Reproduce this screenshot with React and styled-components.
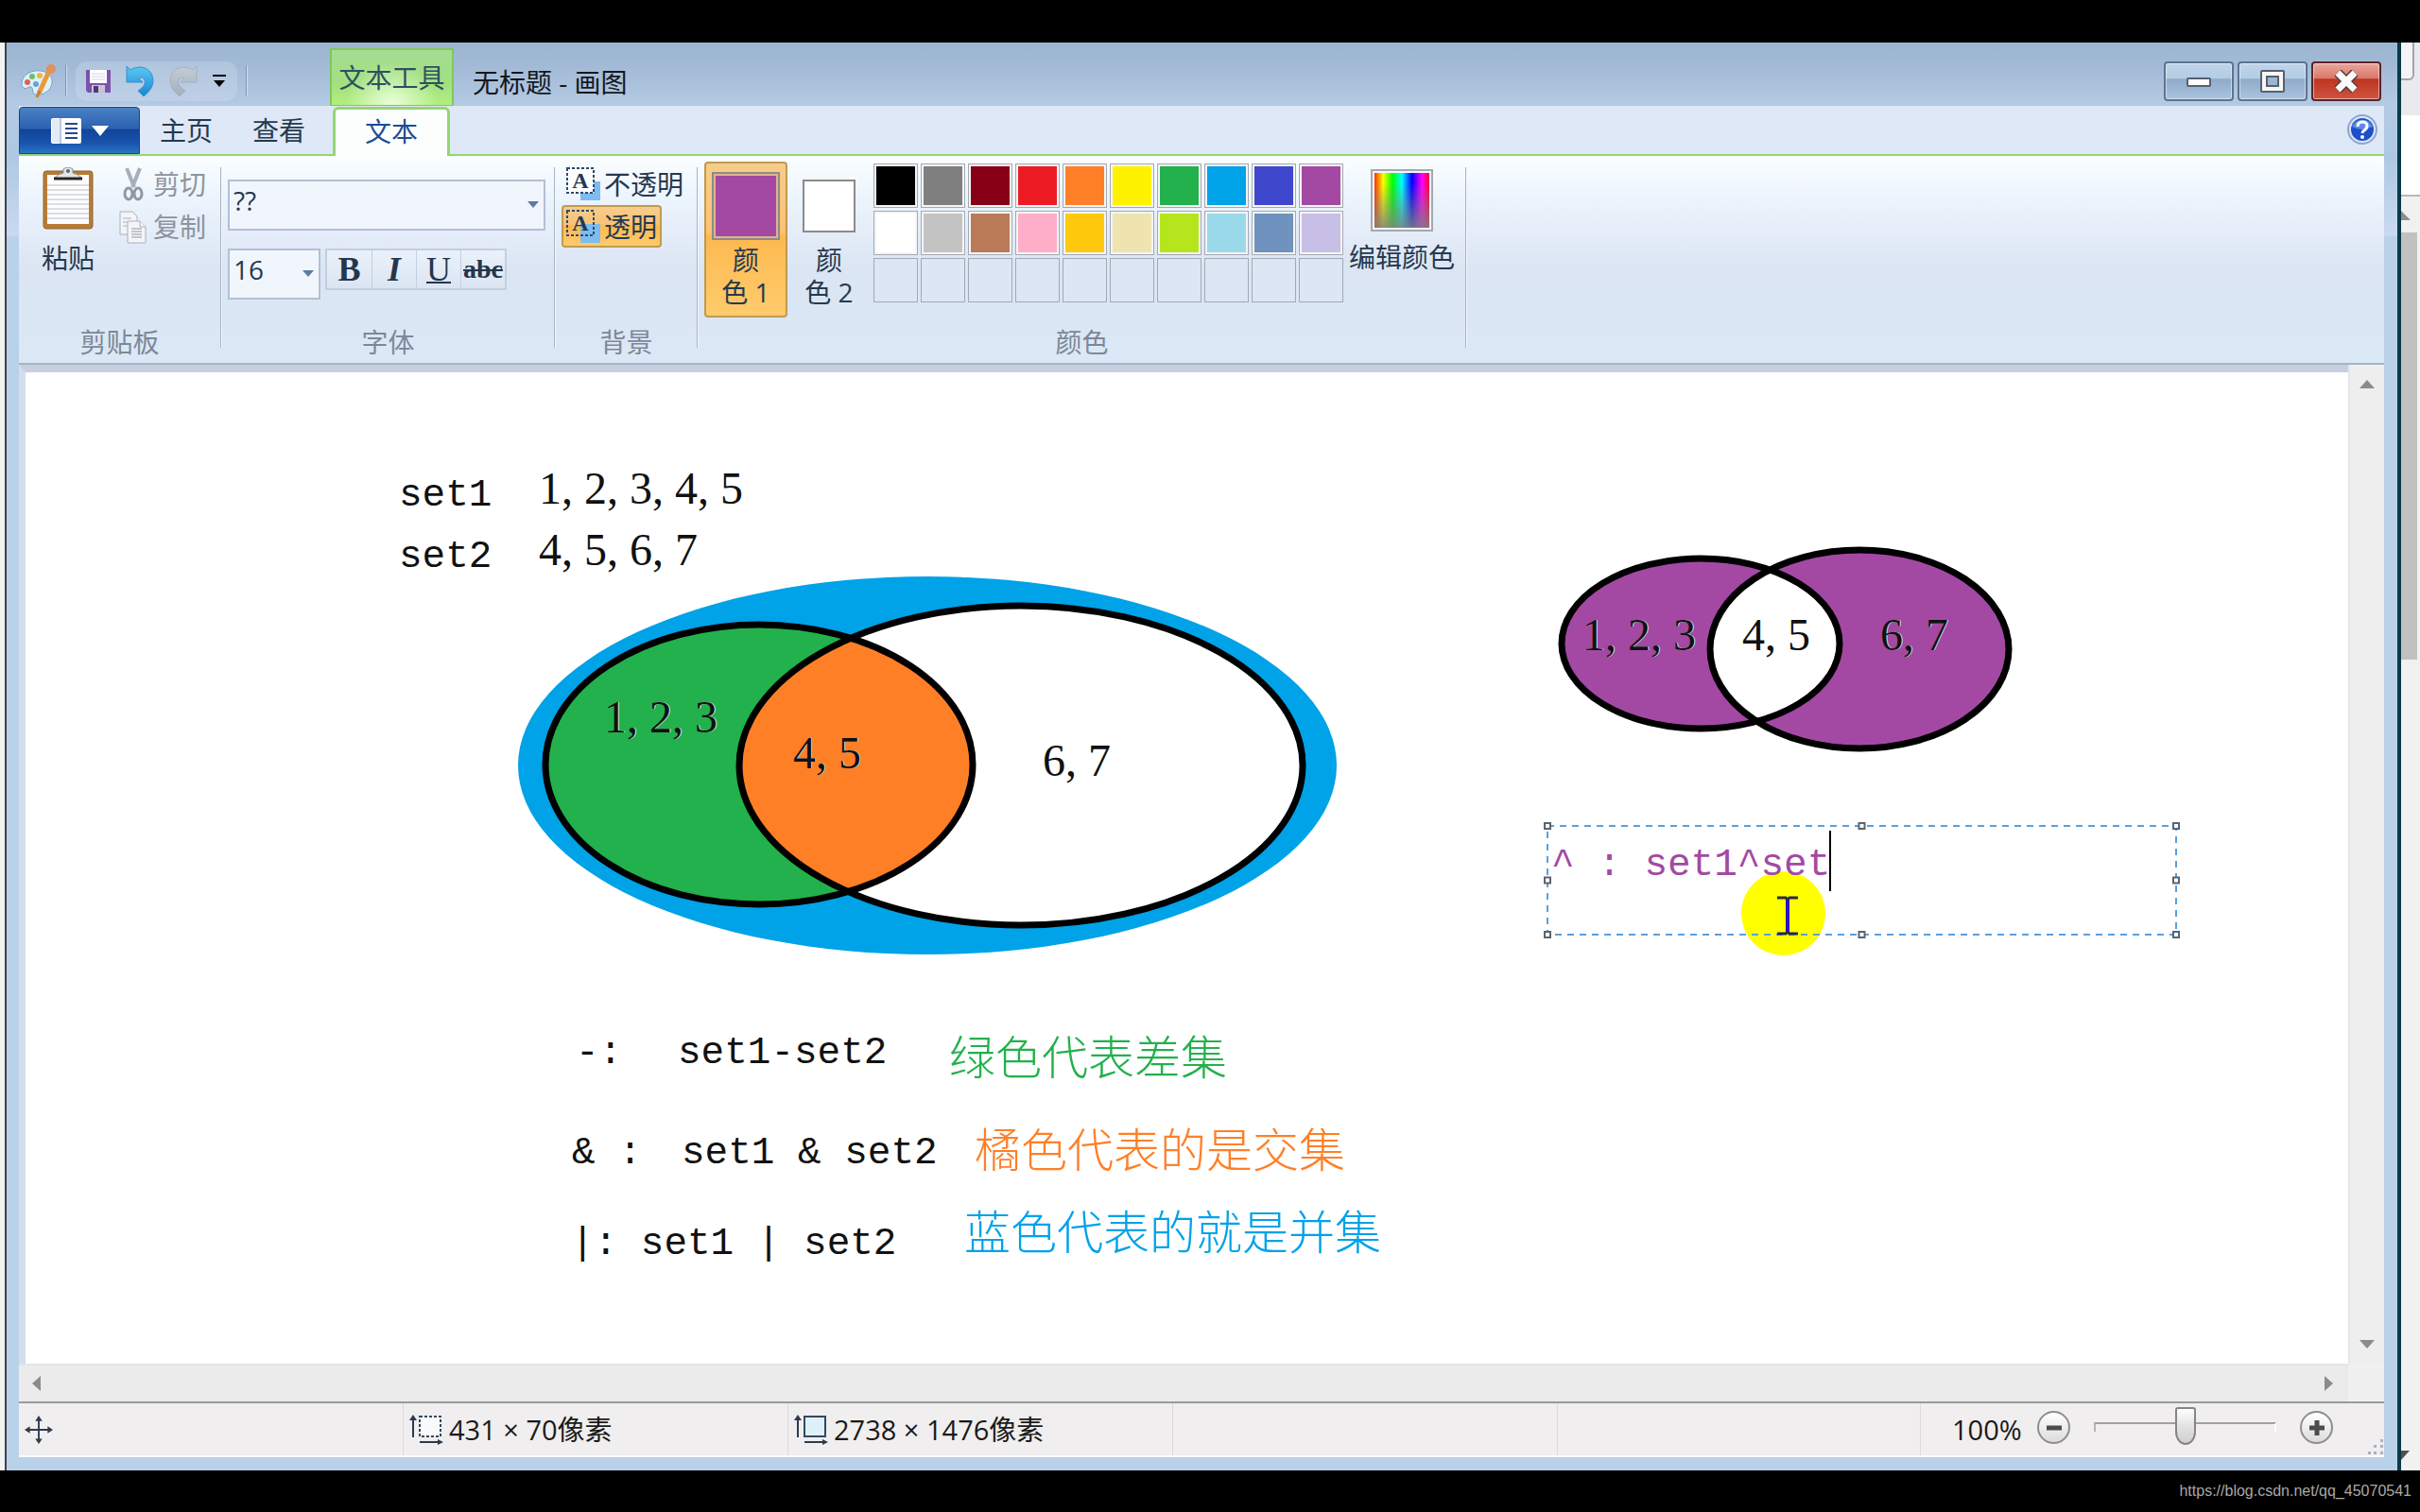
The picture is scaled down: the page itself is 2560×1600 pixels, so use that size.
import React from 'react';
import styled, { createGlobalStyle, css } from 'styled-components';

const topColors = [
  ['黑色', '#000000'], ['灰色', '#7f7f7f'], ['深红色', '#880015'], ['红色', '#ed1c24'], ['橙色', '#ff7f27'],
  ['黄色', '#fff200'], ['绿色', '#22b14c'], ['蓝色', '#00a2e8'], ['靛蓝', '#3f48cc'], ['紫色', '#a349a4'],
  ['白色', '#ffffff'], ['浅灰', '#c3c3c3'], ['褐色', '#b97a57'], ['玫瑰色', '#ffaec9'], ['金色', '#ffc90e'],
  ['浅黄', '#efe4b0'], ['酸橙色', '#b5e61d'], ['淡青', '#99d9ea'], ['蓝灰', '#7092be'], ['淡紫', '#c8bfe7'],
];

const customSlots = Array.from({ length: 10 }, (_, i) => `自定义 ${i + 1}`);

const notes = [
  { text: 'set1', x: 395, y: 106 },
  { text: 'set2', x: 395, y: 171 },
  { text: '-:', x: 582, y: 696 },
  { text: 'set1-set2', x: 690, y: 696 },
  { text: '& :', x: 578, y: 802 },
  { text: 'set1 & set2', x: 694, y: 802 },
  { text: '|: set1 | set2', x: 577, y: 898 },
];

const numbers = [
  { text: '1, 2, 3, 4, 5', x: 543, y: 99 },
  { text: '4, 5, 6, 7', x: 543, y: 164 },
  { text: '1, 2, 3', x: 612, y: 341, fringe: true },
  { text: '4, 5', x: 812, y: 379, fringe: true },
  { text: '6, 7', x: 1076, y: 387 },
  { text: '1, 2, 3', x: 1647, y: 254, fringe: true },
  { text: '4, 5', x: 1816, y: 254 },
  { text: '6, 7', x: 1962, y: 254, fringe: true },
];

const captions = [
  { text: '绿色代表差集', x: 977, y: 698, color: '#22b14c' },
  { text: '橘色代表的是交集', x: 1004, y: 796, color: '#ff7f27' },
  { text: '蓝色代表的就是并集', x: 993, y: 883, color: '#00a2e8' },
];

function App() {
  return (
    <Screen>
      <GlobalStyle />
      <Desktop>
        <LeftEdge />
        <PaintWindow>
          <TitleBar />
          <TabRow />
          <Ribbon />
          <WorkArea />
          <StatusBar />
        </PaintWindow>
        <BackgroundWindow />
      </Desktop>
      <Watermark>https://blog.csdn.net/qq_45070541</Watermark>
    </Screen>
  );
}

export default App;

// Barra de título

function TitleBar() {
  return (
    <TitleRow>
      <QuickAccess>
        <PaletteIcon />
        <QuickDivider />
        <QuickGroup>
          <IconButton aria-label="保存"><SaveIcon /></IconButton>
          <IconButton aria-label="撤消"><UndoIcon id="undo" from="#5cc8f5" to="#1a86d0" line="#2b93d4" /></IconButton>
          <IconButton aria-label="重做"><UndoIcon id="redo" from="#c6cdd8" to="#a3adbb" line="#a5afbd" flip /></IconButton>
          <IconButton aria-label="自定义快速访问工具栏">
            <svg width="14" height="14" viewBox="0 0 14 14">
              <path d="M0 1h14" stroke="#000" strokeWidth="2" />
              <path d="M1 6h12l-6 7z" fill="#000" />
            </svg>
          </IconButton>
        </QuickGroup>
        <QuickDivider />
      </QuickAccess>
      <ContextTitle>文本工具</ContextTitle>
      <WindowTitle>无标题 - 画图</WindowTitle>
      <WindowButtons>
        <WindowButton aria-label="最小化">
          <svg width="30" height="24" viewBox="0 0 30 24">
            <rect x="3" y="9" width="24" height="8" rx="1" fill="#fff" stroke="#56606e" strokeWidth="2" />
          </svg>
        </WindowButton>
        <WindowButton aria-label="最大化">
          <svg width="30" height="24" viewBox="0 0 30 24">
            <rect x="3" y="1" width="24" height="22" rx="1" fill="#f6f6f6" stroke="#56606e" strokeWidth="2" />
            <rect x="9" y="7" width="12" height="10" fill="#9db5d0" stroke="#56606e" strokeWidth="2" />
          </svg>
        </WindowButton>
        <WindowButton $danger aria-label="关闭">
          <svg width="30" height="24" viewBox="0 0 30 24">
            <path d="M6 3l18 18M24 3L6 21" stroke="#5a3a3a" strokeWidth="10" />
            <path d="M6 3l18 18M24 3L6 21" stroke="#fafafa" strokeWidth="7" />
          </svg>
        </WindowButton>
      </WindowButtons>
    </TitleRow>
  );
}

// Abas da faixa de opções

function TabRow() {
  return (
    <Tabs>
      <AppMenu aria-label="画图">
        <svg width="32" height="27" viewBox="0 0 32 27">
          <rect x="0" y="0" width="32" height="27" rx="2" fill="#fff" />
          <rect x="1" y="1" width="8" height="25" fill="#e3ebf5" />
          <path d="M10 0v27" stroke="#b9c9de" strokeWidth="2" />
          <path d="M15 6h13M15 11h13M15 16h13M15 21h13" stroke="#27498f" strokeWidth="2" />
        </svg>
        <svg width="18" height="11" viewBox="0 0 18 11">
          <path d="M0 0h18l-9 11z" fill="#fff" />
        </svg>
      </AppMenu>
      <Tab>主页</Tab>
      <Tab>查看</Tab>
      <ActiveTab>文本</ActiveTab>
      <HelpButton aria-label="帮助">
        <svg width="32" height="32" viewBox="0 0 32 32">
          <circle cx="16" cy="16" r="15" fill="#dbe5f5" stroke="#8fa6cc" strokeWidth="2" />
          <circle cx="16" cy="16" r="12" fill="#1d4fc8" />
          <path d="M5 13a12 12 0 0 1 22 0q-11 6-22 0z" fill="#5f8ae6" />
          <path d="M11 13q0-5 5-5t5 4q0 3-3 5-2 1-2 3" fill="none" stroke="#fff" strokeWidth="3" />
          <circle cx="16" cy="24" r="2" fill="#fff" />
        </svg>
      </HelpButton>
    </Tabs>
  );
}

function Ribbon() {
  return (
    <RibbonBar>
      <Group $width={213}>
        <ClipboardBody>
          <PasteButton>
            <ClipboardIcon />
            粘贴
          </PasteButton>
          <Stack>
            <SmallButton disabled><ScissorsIcon />剪切</SmallButton>
            <SmallButton disabled><CopyIcon />复制</SmallButton>
          </Stack>
        </ClipboardBody>
        <GroupLabel>剪贴板</GroupLabel>
      </Group>
      <GroupDivider />

      <Group $width={351}>
        <FontBody>
          <ComboBox>
            <Select aria-label="字体" defaultValue="??">
              <option>??</option>
              <option>宋体</option>
            </Select>
            <ComboArrow />
          </ComboBox>
          <FontRow>
            <ComboBox $width={98}>
              <Select aria-label="字号" defaultValue="16">
                <option>16</option>
                <option>18</option>
              </Select>
              <ComboArrow />
            </ComboBox>
            <StyleButtons>
              <StyleButton $bold aria-label="加粗">B</StyleButton>
              <StyleButton $bold $italic aria-label="倾斜">I</StyleButton>
              <StyleButton $line="underline" aria-label="下划线">U</StyleButton>
              <StyleButton $bold $small $line="line-through" aria-label="删除线">abc</StyleButton>
            </StyleButtons>
          </FontRow>
        </FontBody>
        <GroupLabel>字体</GroupLabel>
      </Group>
      <GroupDivider />

      <Group $width={149}>
        <BackgroundBody>
          <ToggleButton aria-pressed="false"><TextFillIcon opaque />不透明</ToggleButton>
          <ToggleButton $active aria-pressed="true"><TextFillIcon />透明</ToggleButton>
        </BackgroundBody>
        <GroupLabel>背景</GroupLabel>
      </Group>
      <GroupDivider />

      <Group $width={811}>
        <ColorBody>
          <ColorButton $active>
            <SwatchArea><Swatch $size={72} $color="#a349a4" $ring="#e0b48e" /></SwatchArea>
            颜<br />色 1
          </ColorButton>
          <ColorButton>
            <SwatchArea><Swatch $size={56} $color="#ffffff" $ring="#ffffff" /></SwatchArea>
            颜<br />色 2
          </ColorButton>
          <Palette>
            {topColors.map(([name, color]) => (
              <PaletteCell key={name} $color={color} aria-label={name} />
            ))}
            {customSlots.map((name) => (
              <PaletteCell key={name} aria-label={name} />
            ))}
          </Palette>
          <EditColors>
            <Spectrum />
            编辑颜色
          </EditColors>
        </ColorBody>
        <GroupLabel>颜色</GroupLabel>
      </Group>
      <GroupDivider />
    </RibbonBar>
  );
}

// Área de desenho com as barras de rolagem

function WorkArea() {
  return (
    <Work>
      <Canvas>
        <Drawing />
        {notes.map((n) => (
          <Note key={n.text} $x={n.x} $y={n.y}>{n.text}</Note>
        ))}
        {numbers.map((n) => (
          <NumberText key={`${n.x}-${n.y}`} $x={n.x} $y={n.y} $fringe={n.fringe}>{n.text}</NumberText>
        ))}
        {captions.map((n) => (
          <Caption key={n.text} $x={n.x} $y={n.y} $color={n.color}>{n.text}</Caption>
        ))}
        <PointerHalo />
        <TextFrame>
          <TextInput aria-label="文本" defaultValue="^ : set1^set" spellCheck={false} />
          <Caret />
          <FrameOutline />
        </TextFrame>
        <IBeam width="24" height="42" viewBox="0 0 24 42">
          <path d="M1 2h9l2 2 2-2h9M1 40h9l2-2 2 2h9" fill="none" stroke="#2a2a3c" strokeWidth="3" />
          <path d="M12 4v34" stroke="#2a14b8" strokeWidth="4" />
        </IBeam>
      </Canvas>
      <VerticalScroll>
        <ScrollButton aria-label="向上滚动"><Arrow d="M0 9l8-9 8 9z" /></ScrollButton>
        <ScrollButton aria-label="向下滚动"><Arrow d="M0 0h16l-8 9z" /></ScrollButton>
      </VerticalScroll>
      <HorizontalScroll>
        <ScrollButton aria-label="向左滚动"><Arrow wide d="M9 0v16L0 8z" /></ScrollButton>
        <ScrollButton aria-label="向右滚动"><Arrow wide d="M0 0v16l9-8z" /></ScrollButton>
      </HorizontalScroll>
      <ScrollCorner />
    </Work>
  );
}

function Drawing() {
  return (
    <DrawingSvg aria-hidden="true">
      <defs>
        <clipPath id="bigRight"><ellipse cx="1053" cy="416" rx="298" ry="169" /></clipPath>
        <clipPath id="smallRight"><ellipse cx="1940" cy="293" rx="158" ry="105" /></clipPath>
      </defs>

      <ellipse cx="954" cy="416" rx="433" ry="200" fill="#00a2e8" />
      <ellipse cx="776" cy="415" rx="226" ry="148" fill="#22b14c" />
      <ellipse cx="1053" cy="416" rx="298" ry="169" fill="#fff" />
      <ellipse cx="776" cy="415" rx="226" ry="148" fill="#ff7f27" clipPath="url(#bigRight)" />
      <g fill="none" stroke="#000" strokeWidth="7">
        <ellipse cx="776" cy="415" rx="226" ry="148" />
        <ellipse cx="1053" cy="416" rx="298" ry="169" />
      </g>

      <ellipse cx="1772" cy="287" rx="147" ry="90" fill="#a349a4" />
      <ellipse cx="1940" cy="293" rx="158" ry="105" fill="#a349a4" />
      <ellipse cx="1772" cy="287" rx="147" ry="90" fill="#fff" clipPath="url(#smallRight)" />
      <g fill="none" stroke="#000" strokeWidth="7">
        <ellipse cx="1772" cy="287" rx="147" ry="90" />
        <ellipse cx="1940" cy="293" rx="158" ry="105" />
      </g>
    </DrawingSvg>
  );
}

function FrameOutline() {
  const spots = [['0%', '0%'], ['50%', '0%'], ['100%', '0%'], ['0%', '50%'], ['100%', '50%'], ['0%', '100%'], ['50%', '100%'], ['100%', '100%']];
  return (
    <OutlineSvg aria-hidden="true">
      <rect width="100%" height="100%" fill="none" stroke="#5b9fdc" strokeWidth="2" strokeDasharray="7 6" />
      {spots.map(([x, y]) => (
        <svg key={x + y} x={x} y={y} overflow="visible">
          <rect x="-3" y="-3" width="6" height="6" fill="#fff" stroke="#5c6470" strokeWidth="2" />
        </svg>
      ))}
    </OutlineSvg>
  );
}

function StatusBar() {
  return (
    <Status>
      <StatusCell>
        <svg width="30" height="32" viewBox="0 0 32 32">
          <path d="M16 3v26M3 16h26" stroke="#2f3a4c" strokeWidth="2" />
          <path d="M16 0l4 6h-8zM16 32l4-6h-8zM0 16l6-4v8zM32 16l-6-4v8z" fill="#2f3a4c" />
        </svg>
      </StatusCell>
      <StatusCell>
        <SizeIcon dashed />
        431 × 70像素
      </StatusCell>
      <StatusCell>
        <SizeIcon />
        2738 × 1476像素
      </StatusCell>
      <StatusCell />
      <StatusFill />
      <ZoomArea>
        <ZoomLabel htmlFor="zoom">100%</ZoomLabel>
        <ZoomButton aria-label="缩小">
          <svg width="18" height="18" viewBox="0 0 18 18"><path d="M1 9h16" stroke="#4c4c4c" strokeWidth="5" /></svg>
        </ZoomButton>
        <ZoomSlider id="zoom" type="range" min="0" max="100" defaultValue="50" />
        <ZoomButton aria-label="放大">
          <svg width="18" height="18" viewBox="0 0 18 18"><path d="M1 9h16M9 1v16" stroke="#4c4c4c" strokeWidth="5" /></svg>
        </ZoomButton>
        <Grip width="18" height="18" viewBox="0 0 18 18">
          <path d="M14 1h3v3h-3zM7 7h3v3H7zM14 7h3v3h-3zM1 14h3v3H1zM7 14h3v3H7zM14 14h3v3h-3z" fill="#a9b3c2" />
        </Grip>
      </ZoomArea>
    </Status>
  );
}

function BackgroundWindow() {
  return (
    <BackColumn>
      <BackHeader />
      <BackToolbar />
      <BackScroll>
        <svg width="14" height="10" viewBox="0 0 14 10"><path d="M0 0l10 10H0z" fill="#8d8f8e" /></svg>
        <BackThumb />
        <svg width="14" height="10" viewBox="0 0 14 10"><path d="M0 0h9L0 10z" fill="#505050" /></svg>
      </BackScroll>
    </BackColumn>
  );
}

// Ícones

function PaletteIcon() {
  return (
    <svg width="38" height="36" viewBox="0 0 38 36">
      <path d="M1 20C2 10 12 6 21 7c9 1 13 7 12 13-1 8-9 13-17 12-5-1-2-6-5-8-3-1-5 3-8 1-2-1-2-3-2-5z" fill="#e0effa" stroke="#6fa5c8" strokeWidth="1" />
      <circle cx="7" cy="19" r="3" fill="#e0604f" />
      <circle cx="12" cy="13" r="3" fill="#6cc06a" />
      <circle cx="20" cy="12" r="3" fill="#f0b93a" />
      <circle cx="16" cy="21" r="3" fill="#5fa8dc" />
      <path d="M31 5L19 31" stroke="#e89a3c" strokeWidth="5" />
      <circle cx="32" cy="5" r="5" fill="#e0925a" />
      <path d="M20 28l-3 7" stroke="#c98035" strokeWidth="3" />
    </svg>
  );
}

function SaveIcon() {
  return (
    <svg width="26" height="26" viewBox="0 0 26 26">
      <path d="M0 1h26v24H2l-2-2z" fill="#7d52ad" />
      <rect x="4" y="1" width="18" height="14" fill="#fff" />
      <path d="M6 5h14M6 8h14M6 11h14" stroke="#cfd4de" strokeWidth="1" />
      <rect x="6" y="17" width="14" height="8" fill="#c9c3d6" />
      <rect x="8" y="18" width="5" height="7" fill="#4e3a72" />
    </svg>
  );
}

function UndoIcon({ id, from, to, line, flip }) {
  return (
    <svg width="30" height="34" viewBox="0 0 30 34">
      <defs>
        <linearGradient id={id} x1="0" y1="0" x2="0" y2="1">
          <stop offset="0" stopColor={from} />
          <stop offset="1" stopColor={to} />
        </linearGradient>
      </defs>
      <path
        d="M1 1l4 4C14-1 28 2 29 16c0 7-4 12-10 17l-6-6c6-4 8-7 7-11-1-3-4-4-6-2l4 4H1z"
        fill={`url(#${id})`}
        stroke={line}
        strokeWidth="1"
        transform={flip ? 'matrix(-1 0 0 1 30 0)' : undefined}
      />
    </svg>
  );
}

function ClipboardIcon() {
  return (
    <svg width="54" height="66" viewBox="0 0 54 66">
      <rect x="1" y="4" width="52" height="61" rx="3" fill="#b87c35" stroke="#8f6334" strokeWidth="1" />
      <rect x="5" y="8" width="44" height="52" fill="#fdfdfd" />
      <path d="M5 19h44M5 24h44M5 29h44M5 34h44M5 39h44M5 44h44M5 49h44M5 54h44" stroke="#b9bfc6" strokeWidth="1" />
      <path d="M12 12q4-5 10-6V2q5-4 10 0v4q6 1 10 6z" fill="#e4e6e8" stroke="#878d95" strokeWidth="1" />
      <path d="M12 12h30" stroke="#252525" strokeWidth="3" />
      <circle cx="27" cy="4" r="2" fill="#60666e" />
    </svg>
  );
}

function ScissorsIcon() {
  return (
    <svg width="30" height="36" viewBox="0 0 30 36">
      <path d="M8 1l8 20M22 1l-8 20" stroke="#a9afba" strokeWidth="4" />
      <ellipse cx="10" cy="28" rx="4" ry="6" fill="none" stroke="#9097a5" strokeWidth="3" />
      <ellipse cx="20" cy="28" rx="4" ry="6" fill="none" stroke="#9097a5" strokeWidth="3" />
    </svg>
  );
}

function CopyIcon() {
  return (
    <svg width="30" height="36" viewBox="0 0 30 36">
      <g fill="#f3f5f9" stroke="#aab0bc" strokeWidth="1">
        <path d="M1 2h13l5 5v19H1z" />
        <path d="M4 9h9M4 13h9M4 17h9" />
        <path d="M9 12h13l6 6v17H9z" />
        <path d="M22 12v6h6" />
        <path d="M13 20h11M13 23h11M13 26h11M13 29h11" stroke="#8d95a3" />
      </g>
    </svg>
  );
}

function TextFillIcon({ opaque }) {
  return (
    <svg width="38" height="36" viewBox="0 0 38 36">
      <rect x="16" y="15" width="21" height="20" fill="#7cbcf0" />
      <rect x="2" y="1" width="28" height="26" fill={opaque ? '#fff' : 'none'} stroke="#2c4a6c" strokeWidth="2" strokeDasharray="3 2" />
      <text x="16" y="22" textAnchor="middle" fontFamily="Liberation Serif, serif" fontWeight="700" fontSize="24" fill="#1f3a56">A</text>
    </svg>
  );
}

function ComboArrow() {
  return (
    <ArrowSvg width="12" height="7" viewBox="0 0 12 7">
      <path d="M0 0h12L6 7z" fill="#5b7ba5" />
    </ArrowSvg>
  );
}

function Arrow({ d, wide }) {
  const [w, h] = wide ? [9, 16] : [16, 9];
  return (
    <svg width={w} height={h} viewBox={`0 0 ${w} ${h}`}>
      <path d={d} fill="#8b8b8b" />
    </svg>
  );
}

function SizeIcon({ dashed }) {
  return (
    <svg width="36" height="32" viewBox="0 0 36 32">
      <path d="M4 4v20M11 29h20" stroke="#2f3a4c" strokeWidth="2" />
      <path d="M4 0l4 6H0zM36 29l-6-3v6z" fill="#2f3a4c" />
      <rect
        x="11"
        y="2"
        width="22"
        height="21"
        fill={dashed ? '#fafafa' : '#dff0fb'}
        stroke="#2f4a63"
        strokeWidth="2"
        strokeDasharray={dashed ? '3 2' : undefined}
      />
    </svg>
  );
}

// Styled Components

const uiFont = "'Open Sans', 'Noto Sans CJK SC', sans-serif";

const GlobalStyle = createGlobalStyle`
  * {
    box-sizing: border-box;
  }

  body {
    margin: 0;
    background: #000;
    font-family: ${uiFont};
    font-size: 28px;
    line-height: 36px;
  }

  button,
  select,
  input,
  textarea {
    margin: 0;
    padding: 0;
    border: 0;
    background: none;
    font: inherit;
    color: inherit;
  }

  svg {
    display: block;
    flex: none;
  }
`;

const Screen = styled.div`
  display: flex;
  flex-direction: column;
  min-height: 100vh;
  padding-top: 45px;
  background: #000;
`;

const Desktop = styled.div`
  flex: 1;
  display: flex;
  background: #f4f5f5;
`;

const LeftEdge = styled.div`
  width: 7px;
  border-right: 2px solid #3c4248;
  background: #f2f3f3;
`;

// Moldura da janela
const PaintWindow = styled.main`
  flex: 1;
  min-width: 0;
  display: flex;
  flex-direction: column;
  padding: 0 14px 14px 13px;
  border-right: 4px solid #073c46;
  background: linear-gradient(#9cb5d0 0, #a2bad6 24px, #b4cae4 66px, #aec8e4 120px, #c9d9ef 204px, #b9d1e9 206px);
`;

const TitleRow = styled.header`
  display: flex;
  height: 67px;
  color: #17202c;
`;

const QuickAccess = styled.div`
  flex: 0 0 329px;
  display: flex;
  align-items: center;
  padding: 14px 0 0 2px;
`;

const QuickDivider = styled.span`
  width: 2px;
  height: 33px;
  margin: 0 9px;
  background: #7f93ad;
  border-right: 1px solid #d3e0f0;
`;

const QuickGroup = styled.div`
  display: flex;
  align-items: center;
  gap: 16px;
  width: 171px;
  height: 42px;
  padding-left: 11px;
  border-radius: 12px;
  background: rgba(214, 226, 243, 0.3);
`;

const IconButton = styled.button`
  display: flex;
`;

const ContextTitle = styled.div`
  display: flex;
  align-items: center;
  justify-content: center;
  width: 131px;
  margin-top: 6px;
  border: 2px solid #7fc95a;
  border-bottom-width: 1px;
  background: radial-gradient(ellipse at 50% 100%, #eaffd9 0, rgba(190, 245, 140, 0) 55%), linear-gradient(#a6dc94, #a2e07f 60%, #b2ee80);
  color: #2c5160;
`;

const WindowTitle = styled.h1`
  flex: 1;
  margin: 24px 0 0 20px;
  font-size: 28px;
  font-weight: 400;
  line-height: 36px;
  color: #14181e;
`;

const WindowButtons = styled.div`
  display: flex;
  align-items: flex-start;
  gap: 4px;
  padding: 20px 3px 0 0;
`;

const WindowButton = styled.button`
  display: flex;
  align-items: center;
  justify-content: center;
  width: 74px;
  height: 42px;
  border: 2px solid #5d738f;
  border-radius: 4px;
  background: linear-gradient(#c0d5eb, #b3cbe4 42%, #90abc9 44%, #a9c3df);
  box-shadow: inset 0 0 0 1px rgba(255, 255, 255, 0.5);

  ${({ $danger }) => $danger && css`
    border-color: #5c2427;
    background: linear-gradient(#e9a79c, #d9776a 42%, #bf3420 44%, #cc5440);
  `}
`;

const Tabs = styled.nav`
  display: flex;
  height: 53px;
  padding-top: 1px;
  border-bottom: 2px solid #92d873;
  background: #dfe8f6;
  color: #26394f;
`;

const AppMenu = styled.button`
  display: flex;
  align-items: center;
  justify-content: center;
  gap: 11px;
  width: 128px;
  border: 1px solid #1c4385;
  border-radius: 4px 4px 0 0;
  background: linear-gradient(#4a80c4, #2b62b0 46%, #10439a 48%, #1a56ae 80%, #2a74c8);
`;

const Tab = styled.button`
  width: 98px;
`;

const ActiveTab = styled(Tab)`
  width: 124px;
  height: 52px;
  margin-left: 8px;
  padding-bottom: 3px;
  border: 3px solid #92d873;
  border-bottom: 0;
  border-radius: 6px 6px 0 0;
  background: #fcfefe;
  color: #1e4b93;
`;

const HelpButton = styled.button`
  display: flex;
  margin: 8px 7px 0 auto;
`;

const RibbonBar = styled.section`
  display: flex;
  height: 221px;
  border-bottom: 2px solid #a6b4c8;
  background: linear-gradient(#fbfeff 0, #edf5fd 40px, #dbe5f3 120px, #dbe8f6 100%);
  color: #26394f;
`;

const Group = styled.div`
  flex: none;
  display: flex;
  flex-direction: column;
  width: ${({ $width }) => $width}px;
`;

const GroupDivider = styled.div`
  width: 2px;
  height: 191px;
  margin-top: 12px;
  border-left: 1px solid #a9b4c4;
  border-right: 1px solid #f3f7fc;
`;

const GroupLabel = styled.div`
  padding-bottom: 4px;
  text-align: center;
  color: #7d8897;
`;

const ClipboardBody = styled.div`
  flex: 1;
  display: flex;
  align-items: flex-start;
  gap: 26px;
  padding: 7px 0 0 24px;
`;

const PasteButton = styled.button`
  display: flex;
  flex-direction: column;
  align-items: center;
  gap: 12px;
  padding-top: 5px;
`;

const Stack = styled.div`
  display: flex;
  flex-direction: column;
`;

const SmallButton = styled.button`
  display: flex;
  align-items: center;
  gap: 6px;
  height: 45px;
  color: #8d949e;
`;

const FontBody = styled.div`
  flex: 1;
  display: flex;
  flex-direction: column;
  gap: 19px;
  padding: 25px 9px 0 6px;
`;

const FontRow = styled.div`
  display: flex;
  align-items: flex-start;
  gap: 5px;
`;

const ComboBox = styled.div`
  position: relative;
  width: ${({ $width }) => ($width ? `${$width}px` : '100%')};
  height: 54px;
  border: 2px solid #b2c0d5;
  background: #f1f6fd;
`;

const Select = styled.select`
  appearance: none;
  width: 100%;
  height: 40px;
  padding-left: 4px;
`;

const ArrowSvg = styled.svg`
  position: absolute;
  top: 21px;
  right: 5px;
  pointer-events: none;
`;

const StyleButtons = styled.div`
  display: flex;
  height: 44px;
  border: 2px solid #c3cfe0;
  background: linear-gradient(#eaf1fa, #dbe5f2);
`;

const StyleButton = styled.button`
  width: 47px;
  font-family: 'Liberation Serif', serif;
  font-size: ${({ $small }) => ($small ? 28 : 36)}px;
  font-weight: ${({ $bold }) => ($bold ? 700 : 400)};
  font-style: ${({ $italic }) => ($italic ? 'italic' : 'normal')};
  text-decoration: ${({ $line }) => $line || 'none'};
  text-decoration-thickness: 2px;
  color: #24364c;

  & + & {
    border-left: 1px solid #c3cfe0;
  }
`;

const BackgroundBody = styled.div`
  flex: 1;
  display: flex;
  flex-direction: column;
  align-items: flex-start;
  padding: 7px 0 0 6px;
`;

const activeFill = css`
  border-color: #c29a4e;
  background: linear-gradient(#f6cd8c, #fbc274 45%, #fdb950 48%, #ffcb6c);
`;

const ToggleButton = styled.button`
  display: flex;
  align-items: center;
  gap: 3px;
  height: 45px;
  padding: 0 3px 0 2px;
  border: 2px solid transparent;
  border-radius: 4px;
  white-space: nowrap;
  ${({ $active }) => $active && activeFill}
`;

const ColorBody = styled.div`
  flex: 1;
  display: flex;
  align-items: flex-start;
  padding: 6px 0 0 6px;
`;

const ColorButton = styled.button`
  display: block;
  width: 88px;
  height: 165px;
  padding: 0;
  border: 2px solid transparent;
  border-radius: 4px;
  line-height: 34px;
  ${({ $active }) => $active && activeFill}
`;

const SwatchArea = styled.span`
  display: flex;
  align-items: center;
  justify-content: center;
  height: 72px;
  margin-bottom: 4px;
`;

const Swatch = styled.span`
  width: ${({ $size }) => $size}px;
  height: ${({ $size }) => $size}px;
  border: 2px solid #8d8a88;
  background: ${({ $color }) => $color};
  box-shadow: inset 0 0 0 2px ${({ $ring }) => $ring};
`;

const Palette = styled.div`
  display: grid;
  grid-template-columns: repeat(10, 47px);
  grid-auto-rows: 47px;
  gap: 3px;
  margin: 2px 6px 0 3px;
`;

const PaletteCell = styled.button`
  border: 1px solid #a3a9b3;
  background: ${({ $color }) => $color || '#dde6f4'};
  box-shadow: inset 0 0 0 2px ${({ $color }) => ($color ? '#f5f5f5' : '#dde6f4')};
`;

const EditColors = styled.button`
  display: flex;
  flex-direction: column;
  align-items: center;
  gap: 9px;
  padding-top: 8px;
  white-space: nowrap;
`;

const Spectrum = styled.span`
  width: 66px;
  height: 66px;
  border: 2px solid #a3a9b3;
  outline: 2px solid #f5f5f5;
  outline-offset: -4px;
  background: linear-gradient(rgba(128, 128, 128, 0) 20%, rgba(128, 128, 128, 0.9)), linear-gradient(90deg, #f00, #ff0 18%, #0f0 34%, #0ff 50%, #00f 67%, #f0f 84%, #f00);
`;

const Work = styled.section`
  flex: 1;
  display: grid;
  grid-template-columns: minmax(0, 1fr) 38px;
  grid-template-rows: minmax(0, 1fr) 40px;
`;

// A borda em cima e à esquerda separa a folha da faixa de opções
const Canvas = styled.div`
  position: relative;
  overflow: hidden;
  border-top: 8px solid #c6d0df;
  border-left: 7px solid #d3deec;
  background: #fff;
`;

const DrawingSvg = styled.svg`
  width: 100%;
  height: 100%;
`;

const CanvasText = styled.span`
  position: absolute;
  left: ${({ $x }) => $x}px;
  top: ${({ $y }) => $y}px;
  line-height: 48px;
  white-space: pre;
  color: #111;
`;

const Note = styled(CanvasText)`
  font-family: 'Liberation Mono', monospace;
  font-size: 41px;
`;

const NumberText = styled(CanvasText)`
  font-family: 'Liberation Serif', serif;
  font-size: 48px;
  text-shadow: ${({ $fringe }) => ($fringe ? '1px 0 0 #d8e4e4' : 'none')};
`;

const Caption = styled(CanvasText)`
  font-family: 'Noto Sans CJK SC', sans-serif;
  font-size: 49px;
  font-weight: 300;
  color: ${({ $color }) => $color};
`;

const PointerHalo = styled.div`
  position: absolute;
  left: 1815px;
  top: 528px;
  width: 89px;
  height: 89px;
  border-radius: 50%;
  background: #ff0;
`;

const TextFrame = styled.div`
  position: absolute;
  left: 1610px;
  top: 480px;
  width: 665px;
  height: 115px;
`;

const TextInput = styled.textarea`
  display: block;
  width: 100%;
  height: 100%;
  padding: 17px 4px 0;
  overflow: hidden;
  outline: none;
  resize: none;
  font-family: 'Liberation Mono', monospace;
  font-size: 41px;
  line-height: 48px;
  color: #a349a4;
`;

const Caret = styled.span`
  position: absolute;
  left: 298px;
  top: 5px;
  width: 2px;
  height: 64px;
  background: #000;
`;

const OutlineSvg = styled.svg`
  position: absolute;
  inset: 0;
  width: 100%;
  height: 100%;
  overflow: visible;
  pointer-events: none;
`;

const IBeam = styled.svg`
  position: absolute;
  left: 1852px;
  top: 554px;
`;

const ScrollTrack = styled.div`
  display: flex;
  justify-content: space-between;
  align-items: center;
  background: #eeeeee;
`;

const VerticalScroll = styled(ScrollTrack)`
  flex-direction: column;
  padding: 16px 0;
  border-left: 2px solid #e3e6ea;
`;

const HorizontalScroll = styled(ScrollTrack)`
  padding: 0 16px 0 14px;
  border-top: 2px solid #e4e4e4;
  background: #ebebeb;
`;

const ScrollCorner = styled.div`
  background: #f0f0f0;
`;

const ScrollButton = styled.button`
  display: flex;
`;

const Status = styled.footer`
  display: flex;
  height: 59px;
  border-top: 2px solid #9a9a9a;
  border-bottom: 2px solid #fbfcfd;
  background: #f0eeee;
  font-size: 29px;
  color: #1a1a1a;
`;

const StatusCell = styled.div`
  flex: 0 0 407px;
  display: flex;
  align-items: center;
  gap: 6px;
  padding-left: 6px;
  border-right: 1px solid #d8dadd;
`;

const StatusFill = styled.div`
  flex: 1;
  border-right: 1px solid #d8dadd;
`;

const ZoomArea = styled.div`
  display: flex;
  align-items: center;
  width: 490px;
  padding-left: 33px;
`;

const ZoomLabel = styled.label`
  width: 90px;
`;

const ZoomButton = styled.button`
  display: flex;
  align-items: center;
  justify-content: center;
  width: 35px;
  height: 35px;
  margin-bottom: 4px;
  border: 2px solid #8e8e8e;
  border-radius: 50%;
  background: linear-gradient(#fff, #dcdcdc);
`;

const ZoomSlider = styled.input`
  appearance: none;
  width: 193px;
  height: 40px;
  margin: 0 25px 6px;

  &::-webkit-slider-runnable-track {
    height: 10px;
    border-top: 2px solid #a0a0a0;
    border-left: 2px solid #b5b5b5;
    border-right: 2px solid #fff;
  }

  &::-webkit-slider-thumb {
    appearance: none;
    width: 22px;
    height: 40px;
    margin-top: -18px;
    background: linear-gradient(#fdfdfd, #e3e3e3 50%, #cfcfcf);
    border: 2px solid #858585;
    border-radius: 3px 3px 50% 50% / 3px 3px 35% 35%;
  }
`;

const Grip = styled.svg`
  align-self: flex-end;
  margin-left: auto;
`;

const BackColumn = styled.aside`
  display: flex;
  flex-direction: column;
  width: 20px;
`;

const BackHeader = styled.div`
  height: 77px;
  background: #e9e9ee;

  &::before {
    content: '';
    display: block;
    width: 12px;
    height: 38px;
    border-right: 2px solid #a3a3a8;
    border-bottom: 2px solid #a3a3a8;
    border-radius: 0 0 6px 0;
    background: #f4f4f6;
  }
`;

const BackToolbar = styled.div`
  height: 86px;
  border-bottom: 2px solid #b9b9b9;
  background: #fff;
`;

const BackScroll = styled.div`
  flex: 1;
  display: flex;
  flex-direction: column;
  padding: 15px 3px 11px 0;
  background: #f0f1f0;
`;

const BackThumb = styled.div`
  height: 452px;
  margin: 13px 0 auto;
  background: #c0c1c0;
`;

const Watermark = styled.footer`
  padding: 4px 9px 4px 0;
  font-family: 'Liberation Sans', sans-serif;
  font-size: 16px;
  text-align: right;
  color: #a8a8a8;
`;
